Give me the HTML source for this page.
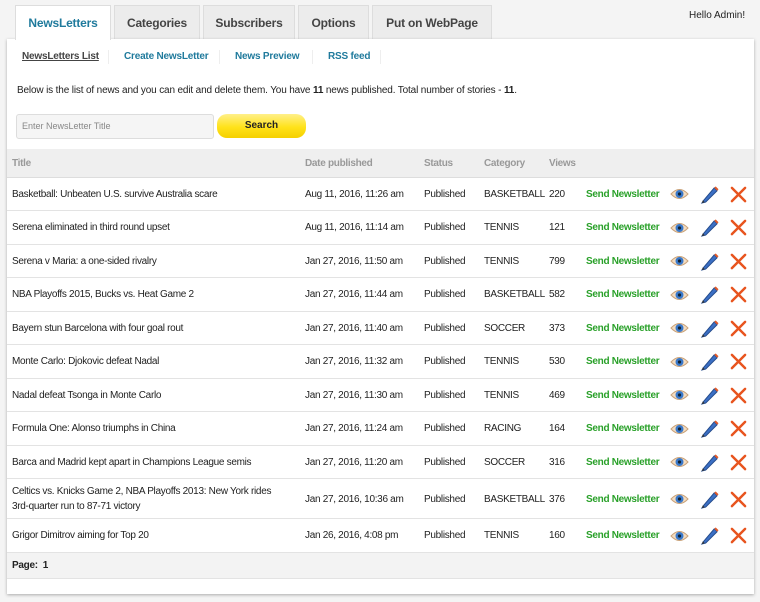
<!DOCTYPE html>
<html><head><meta charset="utf-8"><style>
*{box-sizing:border-box;margin:0;padding:0}
body{width:760px;height:602px;background:#f4f4f4;font-family:"Liberation Sans",sans-serif;font-size:10px;color:#222;position:relative;overflow:hidden}
.tab{position:absolute;top:5px;height:34px;background:#ececec;border:1px solid #ddd;border-bottom:none;font-weight:bold;font-size:12px;color:#444;text-align:center;line-height:34px;letter-spacing:-0.2px}
.tab.a{background:#fff;color:#1f7a9c;height:35px;z-index:2}
.hello{position:absolute;left:689px;top:10px;font-size:10px}
.panel{position:absolute;left:7px;top:39px;width:747px;height:555px;background:#fff;box-shadow:0 1px 3px #aaa}
.sub{position:absolute;top:51px;font-weight:bold;color:#1f7a9c;font-size:10px;letter-spacing:-0.2px}
.sep{position:absolute;top:50px;width:1px;height:14px;background:#eee}
.info{position:absolute;left:17px;top:85px;letter-spacing:-0.15px}
.inp{position:absolute;left:16px;top:114px;width:198px;height:25px;border:1px solid #ddd;border-radius:3px;background:#f5f5f5;color:#888;font-size:9px;line-height:23px;padding-left:5px}
.btn{position:absolute;left:217px;top:114px;width:89px;height:24px;border-radius:10px;background:linear-gradient(#fff08a,#ffe21a 55%,#f5d000);text-align:center;font-weight:bold;line-height:24px}
table{position:absolute;left:7px;top:149px;width:747px;border-collapse:collapse;table-layout:fixed}
td,th{padding:1px 0 0 5px;text-align:left;border-bottom:1px solid #e3e3e3;vertical-align:middle;white-space:nowrap;letter-spacing:-0.3px}
th{height:28px;background:#efefef;color:#999;font-weight:bold;border-bottom:1px solid #ddd}
td{height:33.5px}
.g{color:#2aa12a;font-weight:bold}
.ft td{background:#f3f3f3;height:26px;font-weight:bold}
svg{display:block}
</style></head><body>
<div class="tab a" style="left:15px;width:96px">NewsLetters</div>
<div class="tab" style="left:114px;width:86px">Categories</div>
<div class="tab" style="left:203px;width:92px">Subscribers</div>
<div class="tab" style="left:298px;width:71px">Options</div>
<div class="tab" style="left:372px;width:120px">Put on WebPage</div>
<div class="hello">Hello Admin!</div>
<div class="panel"></div>
<div class="sub" style="left:22px;color:#444;text-decoration:underline">NewsLetters List</div>
<div class="sep" style="left:108px"></div>
<div class="sub" style="left:124px">Create NewsLetter</div>
<div class="sep" style="left:219px"></div>
<div class="sub" style="left:235px">News Preview</div>
<div class="sep" style="left:312px"></div>
<div class="sub" style="left:328px">RSS feed</div>
<div class="sep" style="left:380px"></div>
<div class="info">Below is the list of news and you can edit and delete them. You have <b>11</b> news published. Total number of stories - <b>11</b>.</div>
<div class="inp">Enter NewsLetter Title</div>
<div class="btn">Search</div>
<table>
<colgroup><col style="width:293px"><col style="width:119px"><col style="width:60px"><col style="width:65px"><col style="width:37px"><col style="width:84px"><col style="width:30px"><col style="width:30px"><col></colgroup>
<tr><th>Title</th><th>Date published</th><th>Status</th><th>Category</th><th>Views</th><th></th><th></th><th></th><th></th></tr>
<tbody id="b"></tbody>
</table>
<script>
var r=[["Basketball: Unbeaten U.S. survive Australia scare","Aug 11, 2016, 11:26 am","BASKETBALL",220],
["Serena eliminated in third round upset","Aug 11, 2016, 11:14 am","TENNIS",121],
["Serena v Maria: a one-sided rivalry","Jan 27, 2016, 11:50 am","TENNIS",799],
["NBA Playoffs 2015, Bucks vs. Heat Game 2","Jan 27, 2016, 11:44 am","BASKETBALL",582],
["Bayern stun Barcelona with four goal rout","Jan 27, 2016, 11:40 am","SOCCER",373],
["Monte Carlo: Djokovic defeat Nadal","Jan 27, 2016, 11:32 am","TENNIS",530],
["Nadal defeat Tsonga in Monte Carlo","Jan 27, 2016, 11:30 am","TENNIS",469],
["Formula One: Alonso triumphs in China","Jan 27, 2016, 11:24 am","RACING",164],
["Barca and Madrid kept apart in Champions League semis","Jan 27, 2016, 11:20 am","SOCCER",316],
["Celtics vs. Knicks Game 2, NBA Playoffs 2013: New York rides<br>3rd-quarter run to 87-71 victory","Jan 27, 2016, 10:36 am","BASKETBALL",376],
["Grigor Dimitrov aiming for Top 20","Jan 26, 2016, 4:08 pm","TENNIS",160]];
var eye='<svg width="19" height="14" viewBox="0 0 19 14"><path d="M1 7Q9.5 -2 18 7Q9.5 16 1 7Z" fill="#f3dcc0" stroke="#c9a27a"/><circle cx="9.5" cy="7" r="4" fill="#3a78c9"/><circle cx="9.5" cy="7" r="1.6" fill="#123"/></svg>';
var pen='<svg width="19" height="19" viewBox="0 0 20 20"><path d="M4 16L2 19L6 18L18 6L15 3Z" fill="#3b6fc4" stroke="#234a8a"/><path d="M15 3L18 6L19.5 4.5L16.5 1.5Z" fill="#e05a2a"/><path d="M2 19L3 16L5 18Z" fill="#333"/></svg>';
var x='<svg width="17" height="17" viewBox="0 0 18 18"><path d="M2 2L16 16M16 2L2 16" stroke="#e8541e" stroke-width="2.6" stroke-linecap="round"/></svg>';
var h='';r.forEach(function(a,i){h+='<tr><td'+(i==9?' style="height:40px;line-height:15px"':'')+'>'+a[0]+'</td><td>'+a[1]+'</td><td>Published</td><td>'+a[2]+'</td><td>'+a[3]+'</td><td class="g">Send Newsletter</td><td>'+eye+'</td><td>'+pen+'</td><td>'+x+'</td></tr>'});
h+='<tr class="ft"><td colspan="9">Page:&nbsp; 1</td></tr>';
document.getElementById('b').innerHTML=h;
</script>
</body></html>
